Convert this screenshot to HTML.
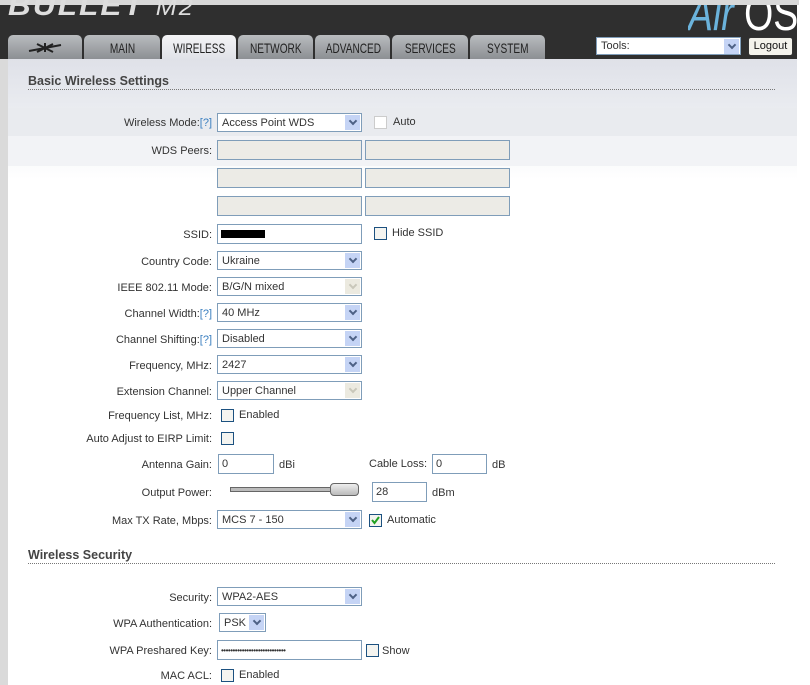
<!DOCTYPE html>
<html><head><meta charset="utf-8"><style>
*{margin:0;padding:0;box-sizing:border-box}
body{width:810px;height:685px;overflow:hidden;background:#fff;font-family:"Liberation Sans",sans-serif;font-size:11px;color:#333;position:relative}
.a{position:absolute}
.top{left:0;top:0;width:810px;height:5px;background:#d8d8d8}
.hdr{left:0;top:5px;width:797px;height:680px;background:#2f2f2f}
.lside{left:0;top:59px;width:8px;height:626px;background:#dadada}
.rside{left:799px;top:0;width:11px;height:685px;background:#fff}
.panel{left:8px;top:59px;width:789px;height:626px;background:linear-gradient(#dfe1e8,#eceef2 60px,#fff 120px)}
.tab{top:35px;height:24px;border-radius:5px 5px 0 0;background:linear-gradient(#b9bcbf,#8c8f93);color:#222;font-size:14px;text-align:center;line-height:26px}
.tab span{display:inline-block;transform:scaleX(0.72)}
.tab.act{background:linear-gradient(#f4f4f6,#e0e2e8)}
.lbl{width:212px;left:0;text-align:right;line-height:14px}
.q{color:#3a7fc0}
.sel{height:19px;border:1px solid #7f9db9;background:#fff;line-height:19px;padding-left:4px}
.sel:after{content:"";position:absolute;right:1px;top:1px;width:15px;height:15px;background:#c5d4f5}
.sel i{position:absolute;right:5px;top:4px;width:6px;height:6px;border-right:2px solid #4d6185;border-bottom:2px solid #4d6185;transform:rotate(45deg);z-index:2}
.sel.dis:after{background:#eceae0}
.sel.dis i{border-color:#c9c7ba}
.inp{height:20px;border:1px solid #7f9db9;background:#fff;line-height:19px;padding-left:3px}
.peer{width:145px;height:20px;border:1px solid #7f9db9;background:#ecebe6}
.cb{width:13px;height:13px;border:1px solid #1c5180;background:#f4f4f0}
.h{font-size:12.5px;font-weight:bold;color:#444;left:28px}
.dot{left:28px;width:747px;border-top:1px dotted #777}
</style></head><body>
<div class="a top"></div>
<div class="a hdr"></div>
<div class="a rside"></div>
<div class="a" style="left:8px;top:0;height:22px;overflow:hidden;width:200px"><div style="font:italic bold 30px 'Liberation Sans',sans-serif;color:#ddd;letter-spacing:2px;line-height:30px;margin-top:-9px;transform:scaleX(1.05);transform-origin:left">BULLET <span style="font-weight:normal;font-size:24px">M2</span></div></div>
<div class="a" style="left:688px;top:5px;height:26px;overflow:hidden;width:110px"><div style="font:48px 'Liberation Sans',sans-serif;line-height:48px;margin-top:-14px;transform:scaleX(0.78);transform-origin:left;white-space:nowrap"><i style="color:#6bb3dc">Air</i><span style="color:#fff"> OS</span></div></div>
<div class="a tab" style="left:8px;width:74px"><svg width="40" height="14" viewBox="0 0 40 14" style="margin-top:5px"><path d="M4 11 L36 5 M20 3 L20 12 M12 4 L28 12 M28 4 L12 12" stroke="#222" stroke-width="2"/></svg></div>
<div class="a tab" style="left:84px;width:76px"><span>MAIN</span></div>
<div class="a tab act" style="left:162px;width:74px"><span>WIRELESS</span></div>
<div class="a tab" style="left:238px;width:75px"><span>NETWORK</span></div>
<div class="a tab" style="left:315px;width:75px"><span>ADVANCED</span></div>
<div class="a tab" style="left:392px;width:76px"><span>SERVICES</span></div>
<div class="a tab" style="left:470px;width:75px"><span>SYSTEM</span></div>
<div class="a sel" style="left:596px;top:37px;width:145px;height:18px;line-height:16px">Tools:<i></i></div>
<div class="a" style="left:748px;top:37px;width:45px;height:19px;border:1px solid #333;border-radius:3px;background:#f4f3ec;text-align:center;line-height:17px;color:#111">Logout</div>
<div class="a lside"></div>
<div class="a panel"></div>
<div class="a" style="left:8px;top:108px;width:789px;height:28px;background:#e9ebef"></div>
<div class="a" style="left:8px;top:136px;width:789px;height:30px;background:#f2f3f6"></div>

<div class="a h" style="top:74px">Basic Wireless Settings</div>
<div class="a dot" style="top:89px"></div>

<div class="a lbl" style="top:116px">Wireless Mode:<span class="q">[?]</span></div>
<div class="a sel" style="left:217px;top:113px;width:145px">Access Point WDS<i></i></div>
<div class="a cb" style="left:374px;top:116px;border-color:#ccc;background:#fff"></div>
<div class="a" style="left:393px;top:116px">Auto</div>

<div class="a lbl" style="top:144px">WDS Peers:</div>
<div class="a peer" style="left:217px;top:140px"></div><div class="a peer" style="left:365px;top:140px"></div>
<div class="a peer" style="left:217px;top:168px"></div><div class="a peer" style="left:365px;top:168px"></div>
<div class="a peer" style="left:217px;top:196px"></div><div class="a peer" style="left:365px;top:196px"></div>

<div class="a lbl" style="top:228px">SSID:</div>
<div class="a inp" style="left:217px;top:224px;width:145px"><span style="display:inline-block;width:44px;height:8px;background:#000;margin-top:5px;vertical-align:top"></span></div>
<div class="a cb" style="left:374px;top:227px"></div><div class="a" style="left:392px;top:227px">Hide SSID</div>

<div class="a lbl" style="top:255px">Country Code:</div>
<div class="a sel" style="left:217px;top:251px;width:145px">Ukraine<i></i></div>
<div class="a lbl" style="top:281px">IEEE 802.11 Mode:</div>
<div class="a sel dis" style="left:217px;top:277px;width:145px">B/G/N mixed<i></i></div>
<div class="a lbl" style="top:307px">Channel Width:<span class="q">[?]</span></div>
<div class="a sel" style="left:217px;top:303px;width:145px">40 MHz<i></i></div>
<div class="a lbl" style="top:333px">Channel Shifting:<span class="q">[?]</span></div>
<div class="a sel" style="left:217px;top:329px;width:145px">Disabled<i></i></div>
<div class="a lbl" style="top:359px">Frequency, MHz:</div>
<div class="a sel" style="left:217px;top:355px;width:145px">2427<i></i></div>
<div class="a lbl" style="top:385px">Extension Channel:</div>
<div class="a sel dis" style="left:217px;top:381px;width:145px">Upper Channel<i></i></div>
<div class="a lbl" style="top:409px">Frequency List, MHz:</div>
<div class="a cb" style="left:221px;top:409px"></div><div class="a" style="left:239px;top:409px">Enabled</div>
<div class="a lbl" style="top:432px">Auto Adjust to EIRP Limit:</div>
<div class="a cb" style="left:221px;top:432px"></div>

<div class="a lbl" style="top:458px">Antenna Gain:</div>
<div class="a inp" style="left:218px;top:454px;width:56px">0</div><div class="a" style="left:279px;top:459px">dBi</div>
<div class="a" style="left:369px;top:458px">Cable Loss:</div>
<div class="a inp" style="left:432px;top:454px;width:55px">0</div><div class="a" style="left:492px;top:459px">dB</div>

<div class="a lbl" style="top:486px">Output Power:</div>
<div class="a" style="left:230px;top:487px;width:102px;height:5px;border:1px solid #666;background:#bbb"></div>
<div class="a" style="left:330px;top:483px;width:29px;height:13px;border:1px solid #666;border-radius:4px;background:linear-gradient(#eee,#bbb)"></div>
<div class="a inp" style="left:372px;top:482px;width:55px">28</div><div class="a" style="left:432px;top:487px">dBm</div>

<div class="a lbl" style="top:514px">Max TX Rate, Mbps:</div>
<div class="a sel" style="left:217px;top:510px;width:145px">MCS 7 - 150<i></i></div>
<div class="a cb" style="left:369px;top:514px"><svg width="11" height="11" viewBox="0 0 11 11" style="position:absolute;left:0;top:0"><path d="M2 5 L4.5 8 L9 2" stroke="#21a121" stroke-width="2" fill="none"/></svg></div>
<div class="a" style="left:387px;top:514px">Automatic</div>

<div class="a h" style="top:548px">Wireless Security</div>
<div class="a dot" style="top:563px"></div>

<div class="a lbl" style="top:591px">Security:</div>
<div class="a sel" style="left:217px;top:587px;width:145px">WPA2-AES<i></i></div>
<div class="a lbl" style="top:617px">WPA Authentication:</div>
<div class="a sel" style="left:219px;top:613px;width:47px">PSK<i></i></div>
<div class="a lbl" style="top:644px">WPA Preshared Key:</div>
<div class="a inp" style="left:217px;top:640px;width:145px;font-size:8px;letter-spacing:-0.5px">••••••••••••••••••••••••••••</div>
<div class="a cb" style="left:366px;top:644px"></div><div class="a" style="left:382px;top:645px">Show</div>
<div class="a lbl" style="top:669px">MAC ACL:</div>
<div class="a cb" style="left:221px;top:669px"></div><div class="a" style="left:239px;top:669px">Enabled</div>
</body></html>
